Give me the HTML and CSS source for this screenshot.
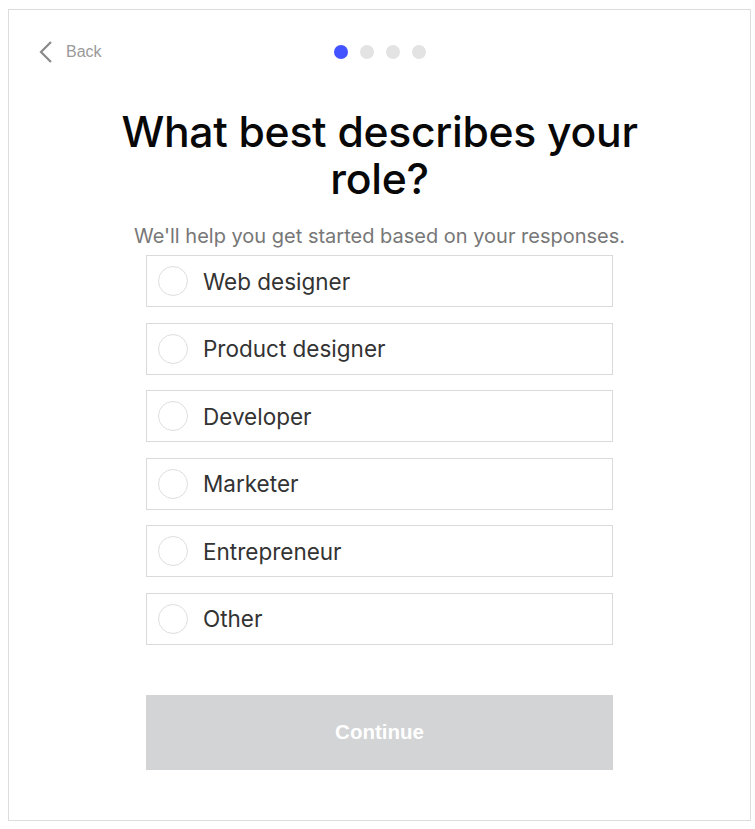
FILE: index.html
```html
<!DOCTYPE html>
<html lang="en">
<head>
    <meta charset="UTF-8">
    <meta name="viewport" content="width=device-width, initial-scale=1.0">
    <title>What best describes your role?</title>
    <link rel="stylesheet" href="styles.css">
</head>
<body>
    <div class="card">
        <div class="top-bar">
            <a class="back" href="#">
                <svg width="16" height="22" viewBox="0 0 16 22">
                    <path d="M13 1 L3 11 L13 21" fill="none" stroke="#8a8a8a" stroke-width="2.2"/>
                </svg>
                <span>Back</span>
            </a>
            <div class="steps">
                <span class="dot active"></span>
                <span class="dot"></span>
                <span class="dot"></span>
                <span class="dot"></span>
            </div>
        </div>

        <h1>What best describes your role?</h1>
        <p class="subtitle">We'll help you get started based on your responses.</p>

        <div class="options">
            <label class="option"><span class="radio"></span>Web designer</label>
            <label class="option"><span class="radio"></span>Product designer</label>
            <label class="option"><span class="radio"></span>Developer</label>
            <label class="option"><span class="radio"></span>Marketer</label>
            <label class="option"><span class="radio"></span>Entrepreneur</label>
            <label class="option"><span class="radio"></span>Other</label>
        </div>

        <button class="continue-btn" disabled>Continue</button>
    </div>
</body>
</html>
```

FILE: styles.css
```css
* {
    box-sizing: border-box;
    margin: 0;
    padding: 0;
}

body {
    margin: 9px 0 0 8px;
    background: #fff;
    font-family: Inter, "Noto Sans", sans-serif;
}

.card {
    width: 743px;
    height: 812px;
    border: 1px solid #dcdcdc;
    display: flex;
    flex-direction: column;
    align-items: center;
}

.top-bar {
    position: relative;
    width: 100%;
    height: 24px;
    margin-top: 30px;
    display: flex;
    justify-content: center;
    align-items: center;
}

.back {
    position: absolute;
    left: 29px;
    top: 1px;
    display: flex;
    align-items: center;
    gap: 12px;
    text-decoration: none;
    color: #9a9a9a;
    font-size: 16px;
    font-family: "Liberation Sans", Arial, sans-serif;
}

.steps {
    display: flex;
    gap: 12px;
}

.dot {
    width: 14px;
    height: 14px;
    border-radius: 50%;
    background: #e3e3e3;
}

.dot.active {
    background: #4353ff;
}

h1 {
    width: 570px;
    margin-top: 44px;
    font-size: 42.7px;
    font-weight: 500;
    line-height: 47px;
    letter-spacing: -0.3px;
    text-align: center;
    color: #080808;
}

.subtitle {
    margin-top: 22px;
    font-size: 20px;
    color: #777;
    text-align: center;
}

.options {
    width: 467px;
    margin-top: 7px;
    display: flex;
    flex-direction: column;
    gap: 15.5px;
}

.option {
    height: 52px;
    border: 1px solid #dadada;
    display: flex;
    align-items: center;
    padding-left: 11px;
    font-size: 22.5px;
    color: #333;
    cursor: pointer;
}

.radio {
    width: 30px;
    height: 30px;
    border: 1px solid #dedede;
    border-radius: 50%;
    margin-right: 15px;
}

.continue-btn {
    width: 467px;
    height: 75px;
    margin-top: 50px;
    border: none;
    background: #d3d4d6;
    color: #fff;
    font-family: "Liberation Sans", Arial, sans-serif;
    font-weight: bold;
    font-size: 20.5px;
}
```
